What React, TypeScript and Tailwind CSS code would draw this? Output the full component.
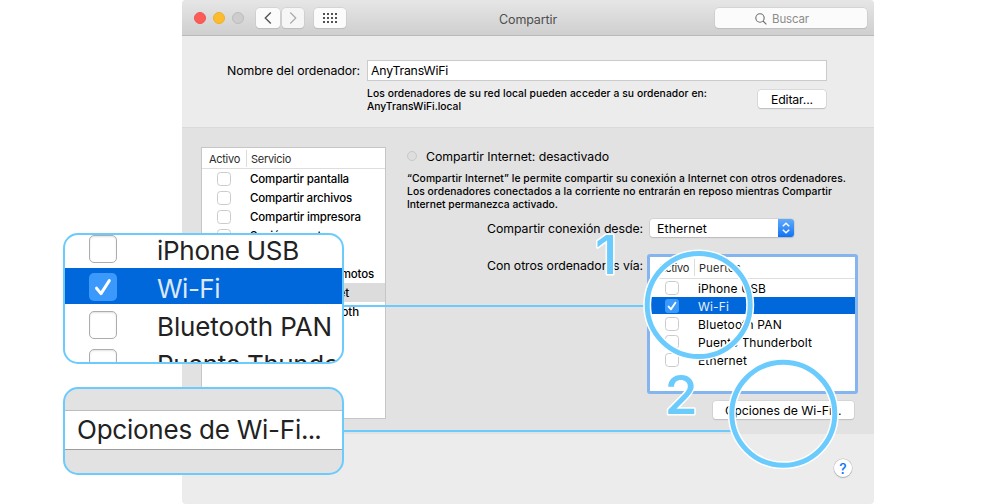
import { useLayoutEffect, useRef, useState } from "react";

type FitProps = { children: string; w: number; className?: string };

/* One line of text whose tracking is tuned so that it spans `w` pixels. */
function Fit({ children, w, className = "" }: FitProps) {
  const ref = useRef<HTMLSpanElement>(null);
  const [spacing, setSpacing] = useState(0);
  useLayoutEffect(() => {
    const el = ref.current;
    if (!el) return;
    const natural = el.getBoundingClientRect().width;
    setSpacing((w - natural) / children.length);
  }, []);
  return (
    <span ref={ref} className={`inline-block shrink-0 whitespace-pre ${className}`} style={{ letterSpacing: `${spacing}px` }}>
      {children}
    </span>
  );
}

function Check({ on = false }: { on?: boolean }) {
  return on ? (
    <span className="flex size-[14px] shrink-0 items-center justify-center rounded-[3px] bg-[#3b99fc]">
      <svg viewBox="0 0 14 14" className="size-[14px]" fill="none" stroke="white" strokeWidth="1.9" strokeLinecap="round" strokeLinejoin="round">
        <path d="M3.6 7.6 6 10.3 10.4 3.7" />
      </svg>
    </span>
  ) : (
    <span className="size-[14px] shrink-0 rounded-[3.5px] border border-[#cbcbcb] bg-white" />
  );
}

function BigCheck({ on = false }: { on?: boolean }) {
  return on ? (
    <span className="mt-[2px] size-7 shrink-0 rounded-[5px] bg-[#3b99fc]">
      <svg viewBox="0 0 28 28" className="size-7" fill="none" stroke="white" strokeWidth="3" strokeLinecap="round" strokeLinejoin="round">
        <path d="M7.5 15.2 12 20.6 20.3 7.6" />
      </svg>
    </span>
  ) : (
    <span className="mt-[2px] size-7 shrink-0 rounded-[5px] border border-[#adadad] bg-white shadow-[inset_0_1px_2px_#e2e2e2]" />
  );
}

const services = [
  { name: "Compartir pantalla", w: 99 },
  { name: "Compartir archivos", w: 102 },
  { name: "Compartir impresora", w: 111 },
  { name: "Sesión remota", w: 78 },
  { name: "Gestión remota", w: 84 },
  { name: "Eventos Apple remotos", w: 124 },
  { name: "Compartir Internet", w: 99, selected: true },
  { name: "Compartir Bluetooth", w: 109 },
];

const ports = [
  { name: "iPhone USB", w: 68 },
  { name: "Wi-Fi", w: 31, on: true },
  { name: "Bluetooth PAN", w: 84 },
  { name: "Puente Thunderbolt", w: 114 },
  { name: "Ethernet", w: 49 },
];

const bigPorts = [
  { name: "iPhone USB", w: 142 },
  { name: "Wi-Fi", w: 63, on: true },
  { name: "Bluetooth PAN", w: 175 },
  { name: "Puente Thunderbolt", w: 236 },
];

function TitleBar() {
  return (
    <header className="flex h-9 shrink-0 items-center border-b border-[#b9b9b9] bg-gradient-to-b from-[#e6e6e6] to-[#cfcfcf] pt-px pr-[7px] pl-3">
      <div className="flex gap-[7px]">
        <span className="size-3 rounded-full border border-[#f0554f] bg-[#fc5b57]" />
        <span className="size-3 rounded-full border border-[#eeb027] bg-[#fdbc2e]" />
        <span className="size-3 rounded-full border border-[#bcbcbc] bg-[#cdcdcd]" />
      </div>
      <div className="ml-3 flex gap-[2px]">
        <span className="flex h-[20px] w-6 items-center justify-center rounded-[4px] bg-[#fbfbfb] shadow-[0_0_0_0.5px_#c8c8c8,0_1px_1px_#b4b4b4]">
          <svg viewBox="0 0 8 14" className="h-[14px] w-2" fill="none" stroke="#555" strokeWidth="1.4"><path d="M6.8 1.5 1.3 7l5.5 5.5" /></svg>
        </span>
        <span className="flex h-[20px] w-[22px] items-center justify-center rounded-[4px] bg-[#f6f6f6] shadow-[0_0_0_0.5px_#c8c8c8,0_1px_1px_#b4b4b4]">
          <svg viewBox="0 0 8 14" className="h-[14px] w-2" fill="none" stroke="#aaa" strokeWidth="1.2"><path d="M1.3 1.5 6.8 7l-5.5 5.5" /></svg>
        </span>
      </div>
      <span className="ml-[10px] flex h-[20px] w-8 items-center justify-center rounded-[4px] bg-[#fbfbfb] shadow-[0_0_0_0.5px_#c8c8c8,0_1px_1px_#b4b4b4]">
        <span className="grid grid-cols-4 gap-[2px]">
          {Array.from({ length: 12 }, (_, i) => (
            <span key={i} className="size-[2px] bg-[#505050]" />
          ))}
        </span>
      </span>
      <Fit w={58} className="mt-[4px] ml-[153px] text-[12.5px] text-[#4e4e4e]">Compartir</Fit>
      <div className="ml-auto flex h-[20px] w-[152px] items-center rounded-[4px] bg-[#fbfbfb] pl-10 shadow-[0_0_0_0.5px_#c8c8c8,0_1px_1px_#b4b4b4]">
        <svg viewBox="0 0 12 12" className="mt-px size-3" fill="none" stroke="#6e6e6e" strokeWidth="1.1"><circle cx="5" cy="5" r="4.2" /><path d="m8 8 3.4 3.4" /></svg>
        <Fit w={37} className="mt-[3px] ml-[5px] text-[11.5px] text-[#8b8b8b]">Buscar</Fit>
      </div>
    </header>
  );
}

function ServiceList() {
  return (
    <div className="mt-[19px] ml-[19px] h-[272px] w-[185px] shrink-0 border border-[#c6c6c6] bg-white">
      <div className="flex h-[21px] items-center border-b border-[#dedede] pl-[7px] text-[11px] text-[#2b2b2b]">
        <Fit w={31} className="mt-[2px]">Activo</Fit>
        <span className="ml-[6px] h-[17px] w-px bg-[#dcdcdc]" />
        <Fit w={40} className="mt-[2px] ml-1">Servicio</Fit>
      </div>
      {services.map((s) => (
        <div key={s.name} className={`flex h-[19px] items-center pl-[15px] ${s.selected ? "bg-[#dcdcdc]" : ""}`}>
          <Check />
          <Fit w={s.w} className="mt-[2px] ml-[19px] text-[11.5px] font-medium">{s.name}</Fit>
        </div>
      ))}
    </div>
  );
}

function PortList() {
  return (
    <div className="h-[140px] w-[211px] rounded-[3px] border-[3px] border-[#85b5ee] bg-white">
      <div className="flex h-[22px] items-center border-b border-[#dedede] pl-[8px] text-[11px] text-[#2b2b2b]">
        <Fit w={31} className="mt-px">Activo</Fit>
        <span className="ml-[5px] h-[17px] w-px bg-[#dcdcdc]" />
        <Fit w={42} className="mt-px ml-[4px]">Puertos</Fit>
      </div>
      {ports.map((p) => (
        <div key={p.name} className={`flex items-center pl-[15px] ${p.on ? "mb-px h-[17px] bg-[#0068da] text-[#e6effb]" : "h-[18px]"}`}>
          <Check on={p.on} />
          <Fit w={p.w} className="mt-[2px] ml-[19px] text-[12px] leading-[16px]">{p.name}</Fit>
        </div>
      ))}
    </div>
  );
}

export default function App() {
  return (
    <div className="relative h-[504px] w-[988px] overflow-hidden bg-white font-['Inter','Liberation_Sans',sans-serif] text-black">
      <div className="ml-[182px] flex h-[504px] w-[692px] flex-col overflow-hidden rounded-[4px] bg-[#ececec]">
        <TitleBar />

        <section className="h-[92px] border-b border-[#d9d9d9] pt-6">
          <div className="flex h-5 items-center pl-[45px]">
            <Fit w={133} className="mt-[2px] text-[12.3px]">Nombre del ordenador:</Fit>
            <div className="ml-[7px] flex h-[21px] w-[460px] items-center border border-[#cbcbcb] bg-white pl-[3px]">
              <Fit w={77} className="mt-[3px] text-[12.3px]">AnyTransWiFi</Fit>
            </div>
          </div>
          <div className="flex pl-[185px]">
            <div className="flex w-[391px] flex-col items-start pt-[7px] text-[10.3px] leading-[13px] font-medium">
              <Fit w={340}>Los ordenadores de su red local pueden acceder a su ordenador en:</Fit>
              <Fit w={94}>AnyTransWiFi.local</Fit>
            </div>
            <div className="mt-[10px] flex h-[18px] w-[68px] items-center justify-center rounded-[3px] bg-white shadow-[0_0_0_0.5px_#c8c8c8,0_1px_1px_#b8b8b8]">
              <Fit w={42} className="mt-[2px] text-[12.3px]">Editar...</Fit>
            </div>
          </div>
        </section>

        <section className="flex h-[306px] bg-[#e2e2e2]">
          <ServiceList />
          <div className="ml-[21px] flex flex-1 flex-col items-start pt-[19px]">
            <div className="flex h-[19px] items-center">
              <span className="mb-px size-[10px] rounded-full border border-[#c8c8c8] bg-[#dedede]" />
              <Fit w={183} className="mt-[2px] ml-[9px] text-[12.3px]">Compartir Internet: desactivado</Fit>
            </div>
            <div className="mt-[6px] flex flex-col items-start text-[10.3px] leading-[13.2px] font-medium">
              <Fit w={439}>“Compartir Internet” le permite compartir su conexión a Internet con otros ordenadores.</Fit>
              <Fit w={425}>Los ordenadores conectados a la corriente no entrarán en reposo mientras Compartir</Fit>
              <Fit w={151}>Internet permanezca activado.</Fit>
            </div>
            <div className="mt-[6.6px] flex h-[20px] items-center pl-[80px]">
              <Fit w={156} className="mt-[2px] text-[12.3px]">Compartir conexión desde:</Fit>
              <div className="ml-[7px] flex h-[18px] w-[144px] items-center overflow-hidden rounded-[3px] bg-white pl-[7px] shadow-[0_0_0_0.5px_#c4c4c4,0_1px_1px_#b4b4b4]">
                <Fit w={50} className="mt-[2px] text-[12.3px]">Ethernet</Fit>
                <span className="ml-auto flex h-full w-4 items-center justify-center bg-gradient-to-b from-[#5fabfa] to-[#0b72f4]">
                  <svg viewBox="0 0 10 14" className="h-[14px] w-[10px]" fill="none" stroke="white" strokeWidth="1.5"><path d="m1.8 5.2 3.2-3 3.2 3M1.8 8.8l3.2 3 3.2-3" /></svg>
                </span>
              </div>
            </div>
            <div className="mt-[16px] flex items-start pl-[80px]">
              <Fit w={156} className="mt-[3px] text-[12.3px] leading-[18px]">Con otros ordenadores vía:</Fit>
              <div className="ml-1">
                <PortList />
                <div className="mt-[7px] ml-[66px] flex h-[18px] w-[141px] items-center rounded-[3px] bg-white pl-[12px] text-[12.3px] shadow-[0_0_0_0.5px_#c8c8c8,0_1px_1px_#b8b8b8]">
                  <Fit w={107} className="mt-[2px]">Opciones de Wi-Fi</Fit>
                  <Fit w={9} className="mt-[2px]">...</Fit>
                </div>
              </div>
            </div>
          </div>
        </section>

        <footer className="flex flex-1 items-start justify-end pt-[25px] pr-[22px]">
          <span className="flex size-[18px] items-center justify-center rounded-full bg-white text-[14px] font-medium text-[#0a76f5] shadow-[0_0_0_0.5px_#bcbcbc,0_1px_1px_#aaa]">?</span>
        </footer>
      </div>

      {/* Numbered markers, rings and leader lines drawn over the window */}
      <svg viewBox="0 0 988 504" className="absolute inset-0 h-[504px] w-[988px] font-['Inter',sans-serif]" fill="none">
        <path d="M343 306H648M343 431H732" stroke="#6ccbfd" strokeWidth="2" />
        <circle cx="698.7" cy="305" r="51.5" stroke="white" strokeWidth="8" />
        <circle cx="783.3" cy="413.8" r="51.5" stroke="white" strokeWidth="8" />
        <circle cx="698.7" cy="305" r="51.5" stroke="#6ccbfd" strokeWidth="5" />
        <circle cx="783.3" cy="413.8" r="51.5" stroke="#6ccbfd" strokeWidth="5" />
        <g fill="#6ccbfd" stroke="white" strokeWidth="3" strokeLinejoin="round" fontSize="54" fontWeight="500">
          <text x="595" y="274" className="[paint-order:stroke]">1</text>
          <text x="664.5" y="414" className="[paint-order:stroke]">2</text>
        </g>
      </svg>

      {/* Magnified port list */}
      <div className="absolute top-[233px] left-[63px] h-[131px] w-[281px] overflow-hidden rounded-[15px] border-2 border-[#6ccbfd] bg-white">
        <div className="-mt-[6px]">
          {bigPorts.map((p) => (
            <div key={p.name} className={`flex h-[38px] items-center border-y border-white pl-6 ${p.on ? "bg-[#0068da] bg-clip-padding text-[#dce8fa]" : "text-[#222]"}`}>
              <BigCheck on={p.on} />
              <Fit w={p.w} className="mt-[6px] ml-[40px] text-[26px] leading-[32px]">{p.name}</Fit>
            </div>
          ))}
        </div>
      </div>

      {/* Magnified options button */}
      <div className="absolute top-[387px] left-[63px] flex h-[88px] w-[281px] flex-col overflow-hidden rounded-[15px] border-2 border-[#6ccbfd] bg-[#e2e2e2] pt-[21px]">
        <div className="flex h-[40px] items-center border-t border-b border-t-[#bcbcbc] border-b-[#9c9c9c] bg-white pl-[12px] text-[26px] leading-[36px] text-[#222]">
          <Fit w={224}>Opciones de Wi-Fi</Fit>
          <Fit w={20}>...</Fit>
        </div>
      </div>
    </div>
  );
}
